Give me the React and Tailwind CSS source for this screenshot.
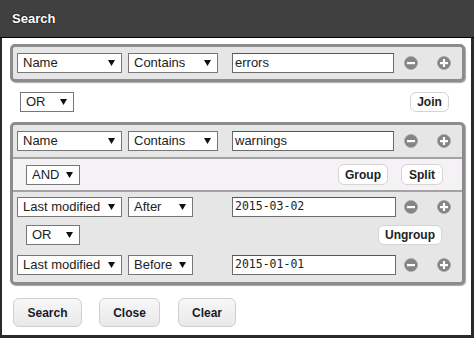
import React from "react";

const Arrow = () => (
  <svg width="7" height="6" viewBox="0 0 7 6" className="shrink-0">
    <polygon points="0,0 7,0 3.5,6" fill="#111" />
  </svg>
);

const Select = ({ label, className }) => (
  <div
    className={`flex h-[20px] items-center justify-between border border-[#777] bg-white pl-[5px] pr-[6px] text-[13px] text-[#222] ${className}`}
  >
    <span>{label}</span>
    <Arrow />
  </div>
);

const TextInput = ({ value, mono, className }) => (
  <div
    className={`flex h-[20px] items-center border border-[#6b6b6b] border-t-[#555] bg-white pl-[2px] text-[#222] ${
      mono ? "font-['DejaVu_Sans_Mono',monospace] text-[11.5px]" : "text-[13px]"
    } ${className}`}
  >
    {value}
  </div>
);

const RoundIcon = ({ plus, className }) => (
  <svg width="14" height="14" viewBox="0 0 14 14" className={className}>
    <circle cx="7" cy="7" r="6.5" fill="#858585" stroke="#9a9a9a" strokeWidth="0.6" />
    <rect x="3" y="6" width="8" height="2.2" fill="#fff" />
    {plus && <rect x="5.9" y="3" width="2.2" height="8" fill="#fff" />}
  </svg>
);

const SmallBtn = ({ children, className }) => (
  <div
    className={`flex items-center justify-center rounded-[6px] border border-[#d4d4d4] bg-white text-[12px] font-bold text-[#222] ${className}`}
  >
    {children}
  </div>
);

const BigBtn = ({ children, className }) => (
  <div
    className={`flex h-[29px] items-center justify-center rounded-[6px] border border-[#cfcfcf] bg-gradient-to-b from-[#f7f7f7] to-[#e9e9e9] text-[12px] font-bold text-[#1a1a2a] ${className}`}
  >
    {children}
  </div>
);

const CondRow = ({ field, op, opClass, value, mono, inputClass }) => (
  <div className="flex h-[20px] items-center pl-[4px]">
    <Select label={field} className="w-[105px]" />
    <div className="ml-[6px] w-[104px]">
      <Select label={op} className={opClass} />
    </div>
    <div className="w-[172px]">
      <TextInput value={value} mono={mono} className={inputClass} />
    </div>
    <RoundIcon />
    <RoundIcon plus className="ml-[19px]" />
  </div>
);

export default function App() {
  return (
    <div className="h-[338px] w-[474px] bg-white font-['Liberation_Sans',Arial,sans-serif]">
      <div className="flex h-[38px] items-center border-b border-black bg-[#404040] pl-[12px] text-[13px] font-bold text-white [text-shadow:0_0_2px_#000]">
        Search
      </div>
      <div className="h-[300px] border-b-[3px] border-l-[2px] border-r-[3px] border-[#2a2a2a] pt-[6px]">
        {/* first group */}
        <div className="ml-[8px] mr-[6px] rounded-[5px] border-[3px] border-[#8c8c8c] bg-[#e6e6e6] py-[6px] shadow-[1px_1px_1px_rgba(0,0,0,0.35)]">
          <CondRow field="Name" op="Contains" opClass="w-[90px]" value="errors" inputClass="w-[162px]" />
        </div>

        <div className="ml-[18px] mr-[22px] mt-[10px] flex h-[20px] items-center justify-between">
          <Select label="OR" className="w-[54px]" />
          <SmallBtn className="h-[20px] w-[39px]">Join</SmallBtn>
        </div>

        {/* second group */}
        <div className="ml-[8px] mr-[6px] mt-[10px] overflow-hidden rounded-[5px] border-[3px] border-[#8c8c8c] bg-[#e6e6e6] shadow-[1px_1px_1px_rgba(0,0,0,0.35)]">
          <div className="py-[6px]">
            <CondRow field="Name" op="Contains" opClass="w-[90px]" value="warnings" inputClass="w-[162px]" />
          </div>
          <div className="flex h-[35px] items-center border-y-2 border-[#a3a3a3] bg-[#f4f2f4] pl-[13px] pr-[19px]">
            <Select label="AND" className="w-[54px]" />
            <SmallBtn className="ml-auto h-[21px] w-[50px]">Group</SmallBtn>
            <SmallBtn className="ml-[13px] h-[21px] w-[42px]">Split</SmallBtn>
          </div>
          <div className="flex flex-col pb-[7px] pt-[5px]">
            <CondRow field="Last modified" op="After" opClass="w-[65px]" value="2015-03-02" mono inputClass="w-[164px]" />
            <div className="mt-[8px] flex h-[20px] items-center justify-between pl-[13px] pr-[20px]">
              <Select label="OR" className="w-[54px]" />
              <SmallBtn className="h-[20px] w-[64px]">Ungroup</SmallBtn>
            </div>
            <div className="mt-[10px]">
              <CondRow field="Last modified" op="Before" opClass="w-[65px]" value="2015-01-01" mono inputClass="w-[164px]" />
            </div>
          </div>
        </div>

        <div className="ml-[11px] mt-[13px] flex items-center">
          <BigBtn className="w-[69px]">Search</BigBtn>
          <BigBtn className="ml-[17px] w-[61px]">Close</BigBtn>
          <BigBtn className="ml-[18px] w-[58px]">Clear</BigBtn>
        </div>
      </div>
    </div>
  );
}
